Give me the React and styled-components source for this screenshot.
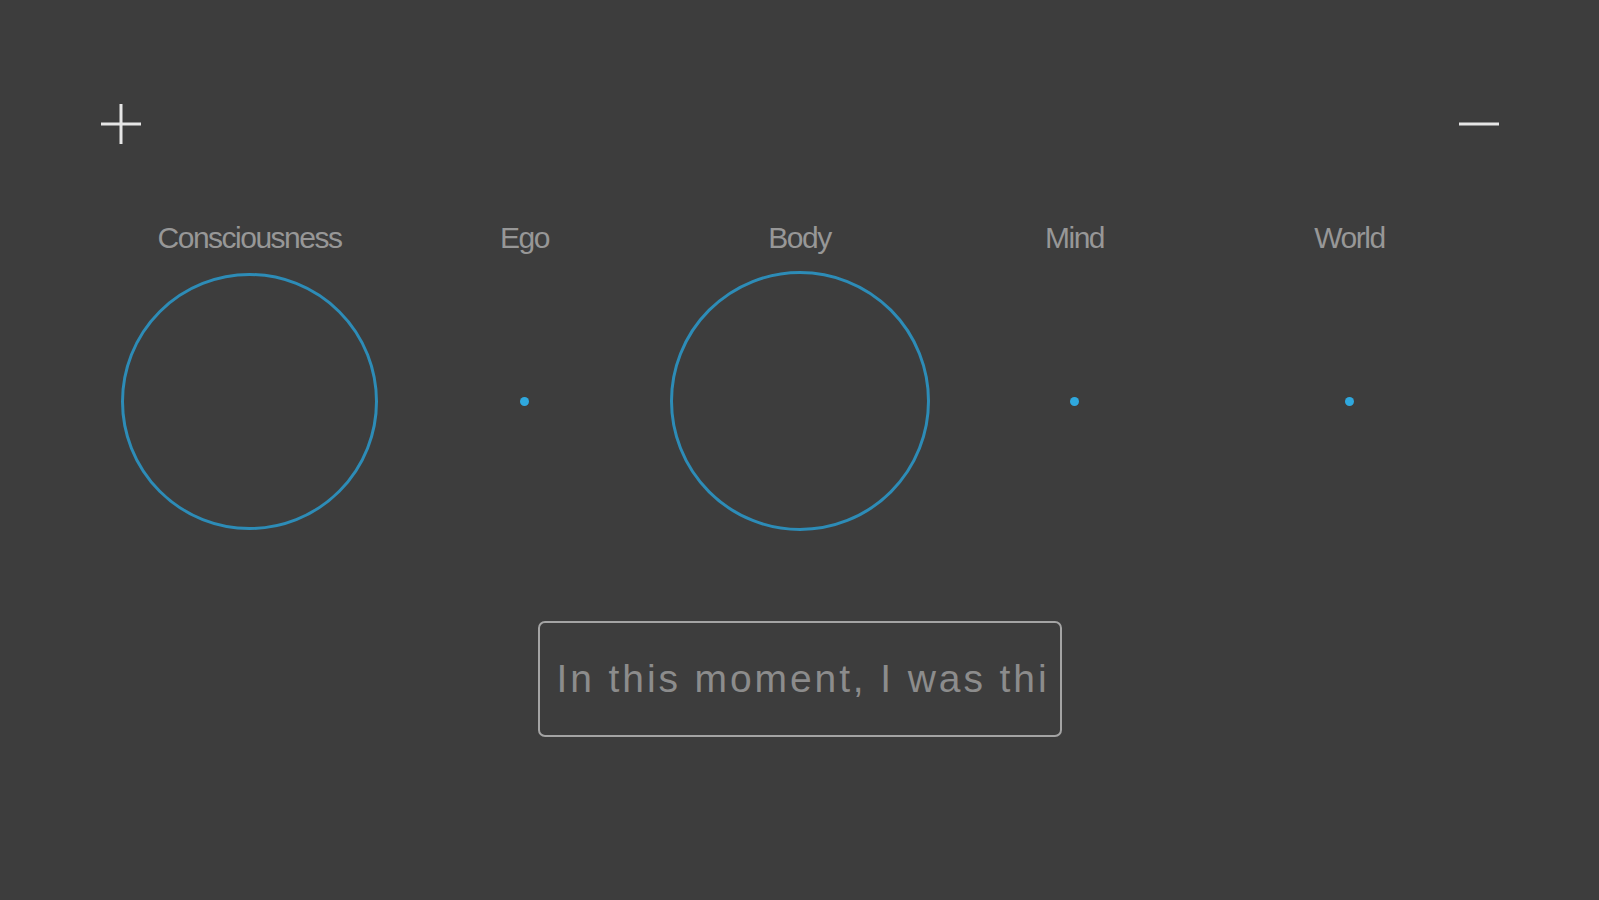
import React from "react";
import styled, { createGlobalStyle } from "styled-components";

const Global = createGlobalStyle`
  html, body { margin: 0; padding: 0; background: #3d3d3d; }
  * { box-sizing: border-box; }
`;

const Page = styled.div`
  min-height: 100vh;
  background: #3d3d3d;
  font-family: "Liberation Sans", Arial, sans-serif;
  display: flex;
  flex-direction: column;
  align-items: stretch;
`;

const Header = styled.div`
  display: flex;
  justify-content: space-between;
  align-items: center;
  padding: 104px 100px 0 101px;
`;

const IconButton = styled.button`
  width: 40px;
  height: 40px;
  padding: 0;
  border: none;
  background: transparent;
  display: flex;
  align-items: center;
  justify-content: center;
  cursor: pointer;
  svg { display: block; }
`;

const Nodes = styled.div`
  display: grid;
  grid-template-columns: repeat(5, 275px);
  justify-content: center;
  margin-top: 76px;
`;

const Node = styled.div`
  display: flex;
  flex-direction: column;
  align-items: center;
`;

const Label = styled.div`
  font-size: 30px;
  line-height: 36px;
  letter-spacing: -1.5px;
  color: #979797;
  font-weight: 400;
`;

const Stage = styled.div`
  margin-top: 15px;
  height: 260px;
  width: 100%;
  display: flex;
  align-items: center;
  justify-content: center;
`;

const Ring = styled.div`
  width: ${(p) => p.$size}px;
  height: ${(p) => p.$size}px;
  border-radius: 50%;
  border: 3px solid #2d8cb7;
`;

const Dot = styled.div`
  width: 9px;
  height: 9px;
  border-radius: 50%;
  background: #2fa8de;
`;

const Footer = styled.div`
  display: flex;
  justify-content: center;
  margin-top: 90px;
`;

const Entry = styled.input`
  width: 524px;
  height: 116px;
  border: 2px solid #a4a4a4;
  border-radius: 7px;
  background: transparent;
  padding: 0 14px 0 17px;
  font-family: "Liberation Sans", Arial, sans-serif;
  font-size: 39px;
  letter-spacing: 2.9px;
  color: #8c8c8c;
  outline: none;
`;

const nodes = [
  { name: "Consciousness", ring: 257 },
  { name: "Ego" },
  { name: "Body", ring: 260 },
  { name: "Mind" },
  { name: "World" },
];

export default function App() {
  return (
    <Page>
      <Global />
      <Header>
        <IconButton aria-label="add">
          <svg width="40" height="40" viewBox="0 0 40 40">
            <line x1="0" y1="20" x2="40" y2="20" stroke="#e6e6e6" strokeWidth="3" />
            <line x1="20" y1="0" x2="20" y2="40" stroke="#e6e6e6" strokeWidth="3" />
          </svg>
        </IconButton>
        <IconButton aria-label="remove">
          <svg width="40" height="40" viewBox="0 0 40 40">
            <line x1="0" y1="20" x2="40" y2="20" stroke="#e6e6e6" strokeWidth="3" />
          </svg>
        </IconButton>
      </Header>
      <Nodes>
        {nodes.map((n) => (
          <Node key={n.name}>
            <Label>{n.name}</Label>
            <Stage>{n.ring ? <Ring $size={n.ring} /> : <Dot />}</Stage>
          </Node>
        ))}
      </Nodes>
      <Footer>
        <Entry readOnly value="In this moment, I was thi" />
      </Footer>
    </Page>
  );
}
